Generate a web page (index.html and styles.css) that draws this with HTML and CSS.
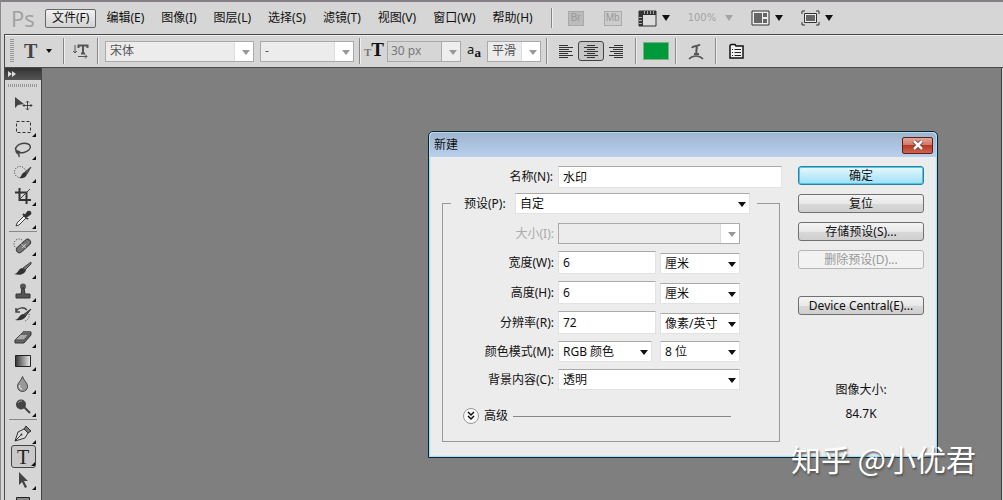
FILE: index.html
```html
<!DOCTYPE html>
<html lang="zh-CN">
<head>
<meta charset="utf-8">
<title>Photoshop</title>
<link rel="stylesheet" href="styles.css">
</head>
<body>
<div class="app">
  <header class="menubar">
    <span class="logo">Ps</span>
    <nav class="menus">
      <button class="menu menu-active">文件(F)</button>
      <button class="menu">编辑(E)</button>
      <button class="menu">图像(I)</button>
      <button class="menu">图层(L)</button>
      <button class="menu">选择(S)</button>
      <button class="menu">滤镜(T)</button>
      <button class="menu">视图(V)</button>
      <button class="menu">窗口(W)</button>
      <button class="menu">帮助(H)</button>
    </nav>
    <span class="bar-line menu-line"></span>
    <div class="launchers">
      <button class="badge" disabled>Br</button>
      <button class="badge badge-wide" disabled>Mb</button>
    </div>
    <div class="views">
      <button class="view-btn" aria-label="查看额外内容">
        <svg width="19" height="17" viewBox="0 0 19 17"><path d="M1 1h17v15H1z" fill="#ddd" stroke="#333"/><path d="M1 1h17v4H5v11H1z" fill="#333"/><path d="M6.500 1v3M9.500 1v3M12.500 1v3M15.500 1v3M1 7.500h3M1 10.500h3M1 13.500h3" stroke="#aaa"/></svg>
        <span class="caret"></span>
      </button>
      <button class="view-btn zoom-level" disabled>100% <span class="caret"></span></button>
      <button class="view-btn" aria-label="排列文档">
        <svg width="19" height="16" viewBox="0 0 19 16"><path d="M1 1h17v14H1z" fill="#eee" stroke="#333"/><path d="M3 3h8v10H3zM12 3h4v4h-4zM12 9h4v4h-4z" fill="#666"/></svg>
        <span class="caret"></span>
      </button>
      <button class="view-btn" aria-label="屏幕模式">
        <svg width="19" height="16" viewBox="0 0 19 16"><path d="M1 4V1h3M15 1h3v3M18 12v3h-3M4 15H1v-3" fill="none" stroke="#333"/><path d="M3.500 3.500h12v9h-12z" fill="#eee" stroke="#333"/><path d="M5 5h9v6H5z" fill="#666"/></svg>
        <span class="caret"></span>
      </button>
    </div>
  </header>

  <div class="options">
    <span class="grip"></span>
    <button class="type-tool" aria-label="文字工具"><span class="serif-t">T</span><span class="caret caret-small"></span></button>
    <span class="bar-line"></span>
    <button class="orient" aria-label="更改文本方向">
      <svg width="16" height="16" viewBox="0 0 16 16" fill="none" stroke="#555"><path d="M2 2v8M0 8l2 2 2-2M5 13.500h9M12 11.500l2 2-2 2"/><path d="M5.500 5V2.500h9V5M10 2.500v8M8 10.500h4" stroke-width="2"/></svg>
    </button>
    <span class="bar-line"></span>
    <span class="pick pick-off font-family"><select aria-label="字体" disabled><option>宋体</option></select></span>
    <span class="pick pick-off font-style"><select aria-label="字体样式" disabled><option>-</option></select></span>
    <span class="bar-line"></span>
    <label class="size-mark" for="size" aria-label="字体大小"><span class="t-small">T</span><span class="t-big">T</span></label>
    <span class="pick pick-off font-size"><select id="size" disabled><option>30 px</option></select></span>
    <label class="aa-mark" for="aa"><span>a</span><span class="a-low">a</span></label>
    <span class="pick pick-off anti-alias"><select id="aa" disabled><option>平滑</option></select></span>
    <span class="bar-line"></span>
    <div class="aligns">
      <button class="align" aria-label="左对齐"><svg width="16" height="14" viewBox="0 0 16 14"><path d="M1 1.500h9M1 3.500h14M1 5.500h10M1 7.500h13M1 9.500h9M1 11.500h14M1 13.500h9" stroke="#333"/></svg></button>
      <button class="align align-on" aria-label="居中"><svg width="16" height="14" viewBox="0 0 16 14"><path d="M4 1.500h8M1 3.500h14M4 5.500h8M1 7.500h14M4 9.500h8M1 11.500h14M4 13.500h8" stroke="#333"/></svg></button>
      <button class="align" aria-label="右对齐"><svg width="16" height="14" viewBox="0 0 16 14"><path d="M6 1.500h9M1 3.500h14M5 5.500h10M2 7.500h13M6 9.500h9M1 11.500h14M6 13.500h9" stroke="#333"/></svg></button>
    </div>
    <span class="bar-line"></span>
    <button class="swatch" aria-label="文本颜色"></button>
    <span class="bar-line"></span>
    <button class="warp" aria-label="变形文字"><svg width="16" height="17" viewBox="0 0 16 17" fill="none" stroke="#555"><path d="M4 5C5 2 8 4.500 12 1.500" stroke-width="2"/><path d="M8.500 3c1 3-1 5 0 8M6 11h5" stroke-width="2"/><path d="M1 16c4-4 10-4 14 0" stroke-width="1.500"/></svg></button>
    <span class="bar-line"></span>
    <button class="panels" aria-label="字符和段落面板"><svg width="15" height="16" viewBox="0 0 15 16"><path d="M1 2.500l1-1h4l1 1.500h7v12H1z" fill="#f4f4f4" stroke="#111" stroke-width="1.500"/><path d="M3 6.500h1M3 9.500h1M3 12.500h1M5.500 6.500H12M5.500 9.500H12M5.500 12.500H12" stroke="#222"/></svg></button>
  </div>

  <main class="workspace">
    <aside class="tools">
      <div class="tools-head"><svg width="9" height="6" viewBox="0 0 9 6"><path d="M0 0l4 3-4 3zM4 0l4 3-4 3z" fill="#ddd"/></svg></div>
      <span class="tools-grip"></span>
      <button class="tool" aria-label="移动"><svg viewBox="0 0 20 20"><path d="M2 3v11l3-3 6-1z" fill="#444"/><path d="M14.500 7v9M10 11.500h9M13 8.500l1.500-1.500 1.500 1.500M13 14.500l1.500 1.500 1.500-1.500M11.500 10L10 11.500l1.500 1.500M17.500 10l1.500 1.500-1.500 1.500" fill="none" stroke="#444"/></svg></button>
      <button class="tool more" aria-label="选框"><svg viewBox="0 0 20 20"><path d="M3.500 4.500h14v11h-14z" fill="none" stroke="#333" stroke-dasharray="3 2"/></svg></button>
      <button class="tool more" aria-label="套索"><svg viewBox="0 0 20 20" fill="none" stroke="#444" stroke-width="1.500"><ellipse cx="10" cy="8" rx="7.500" ry="4.500" transform="rotate(-12 10 8)"/><path d="M4 10c-2 2 0 4 2 3s-2-3-2-1 3 2 2 5"/></svg></button>
      <button class="tool more" aria-label="快速选择"><svg viewBox="0 0 20 20"><circle cx="7" cy="9" r="5.500" fill="none" stroke="#333" stroke-dasharray="1 1.500"/><path d="M18 4l-6 5 2 2z" fill="#555" stroke="#444"/><path d="M12 9l2 2c-1 4-5 5-8 4 3-1 2-5 6-6z" fill="#333"/></svg></button>
      <button class="tool more" aria-label="裁剪"><svg viewBox="0 0 20 20"><path d="M6.500 2v12H18M2 6.500h11.500V18" fill="none" stroke="#333" stroke-width="2"/><path d="M6 14L17 3" stroke="#444"/></svg></button>
      <button class="tool more" aria-label="吸管"><svg viewBox="0 0 20 20"><path d="M3 17l1-3 7-7 2 2-7 7z" fill="#eee" stroke="#444"/><path d="M10 5l5 5M12 7l3-4c2-1 3 1 2 2l-4 3z" fill="#333" stroke="#333" stroke-width="2"/></svg></button>
      <span class="tool-line"></span>
      <button class="tool more" aria-label="修复画笔"><svg viewBox="0 0 20 20"><circle cx="6" cy="8" r="5" fill="none" stroke="#333" stroke-dasharray="1 1.500"/><rect x="2" y="7" width="17" height="6" rx="3" transform="rotate(-42 10.500 10)" fill="#777" stroke="#444"/><path d="M8.500 8l4 4M9 12l4-4" stroke="#ccc"/></svg></button>
      <button class="tool more" aria-label="画笔"><svg viewBox="0 0 20 20"><path d="M18 3l-8 6 2 2 6-6z" fill="#777" stroke="#444"/><path d="M9 9l4 2c-1 4-6 6-12 4 4 0 4-5 8-6z" fill="#333"/></svg></button>
      <button class="tool more" aria-label="仿制图章"><svg viewBox="0 0 20 20"><circle cx="10" cy="4.500" r="3" fill="#555"/><path d="M9 6h2l1 6h5v4H3v-4h5z" fill="#555" stroke="#333"/></svg></button>
      <button class="tool more" aria-label="历史记录画笔"><svg viewBox="0 0 20 20"><path d="M3 6c3-4 8-4 11-1M3 3v4h4" fill="none" stroke="#444" stroke-width="1.500"/><path d="M18 4l-8 6 2 2z" fill="#555" stroke="#333"/><path d="M10 9l3 2c-2 4-6 5-11 4 4-1 4-5 8-6z" fill="#333"/><path d="M16 9c1 3-1 6-4 7" fill="none" stroke="#444" stroke-dasharray="1 1.500"/></svg></button>
      <button class="tool more" aria-label="橡皮擦"><svg viewBox="0 0 20 20"><path d="M2 12l8-8h8v3l-7 8H2z" fill="#666" stroke="#333"/><path d="M2 12l8-8h8l-7 8z" fill="#aaa" stroke="#444"/><path d="M7 7h8l3-3h-8z" fill="#666"/></svg></button>
      <button class="tool more" aria-label="渐变"><svg viewBox="0 0 20 20"><defs><linearGradient id="fade"><stop stop-color="#333"/><stop offset="1" stop-color="#eee"/></linearGradient></defs><path d="M2.500 4.500h15v11h-15z" fill="url(#fade)" stroke="#222"/></svg></button>
      <button class="tool more" aria-label="模糊"><svg viewBox="0 0 20 20"><path d="M9.500 2.500c1 4 5 6 5 10a5 5 0 0 1-10 0c0-4 4-6 5-10z" fill="#999" stroke="#444"/><path d="M7 11c-1 3 0 4 2 4" fill="none" stroke="#eee"/></svg></button>
      <button class="tool more" aria-label="减淡"><svg viewBox="0 0 20 20"><path d="M11 10l6 6" stroke="#444" stroke-width="2"/><circle cx="8" cy="7.500" r="5" fill="#444"/><path d="M5 6c1-2 3-2 4-2" fill="none" stroke="#999"/></svg></button>
      <span class="tool-line"></span>
      <button class="tool more" aria-label="钢笔"><svg viewBox="0 0 20 20"><path d="M2 17L5 8l6-3 4 4-3 5z" fill="#ddd" stroke="#333"/><path d="M2 17l6-6M11 5l2-3 5 5-3 2z" fill="#777" stroke="#333"/><circle cx="8.500" cy="10.500" r="1" fill="#333"/></svg></button>
      <button class="tool more tool-on" aria-label="横排文字"><span class="serif-t">T</span></button>
      <button class="tool more" aria-label="路径选择"><svg viewBox="0 0 20 20"><path d="M6 2v13l3-3 3 6 2-1-3-6h4z" fill="#444"/></svg></button>
      <button class="tool more" aria-label="矩形"><svg viewBox="0 0 20 20"><path d="M3.500 4.500h13v11h-13z" fill="#888" stroke="#222"/></svg></button>
    </aside>

    <section class="canvas">
      <form class="dialog" role="dialog" aria-labelledby="dialog-title">
        <div class="titlebar">
          <h1 class="title" id="dialog-title">新建</h1>
          <button class="close" type="button" aria-label="关闭"><svg width="12" height="10" viewBox="0 0 12 10"><path d="M2 1l8 8M10 1L2 9" stroke="#5d302c" stroke-width="4"/><path d="M2 1l8 8M10 1L2 9" stroke="#fff" stroke-width="2.500"/></svg></button>
        </div>
        <div class="dialog-body">
          <div class="settings">
            <div class="name-row">
              <label for="name">名称(N):</label>
              <input class="box" id="name" type="text" value="水印">
            </div>
            <fieldset class="preset">
              <legend class="preset-head">
                <label for="preset">预设(P):</label>
                <span class="pick"><select id="preset"><option>自定</option></select></span>
              </legend>
              <div class="rows">
                <label class="faded" for="dim">大小(I):</label>
                <div class="fields"><span class="pick pick-off"><select id="dim" disabled><option></option></select></span></div>
                <label for="width">宽度(W):</label>
                <div class="fields"><input class="box amount" id="width" type="text" value="6"><span class="pick unit"><select aria-label="宽度单位"><option>厘米</option></select></span></div>
                <label for="height">高度(H):</label>
                <div class="fields"><input class="box amount" id="height" type="text" value="6"><span class="pick unit"><select aria-label="高度单位"><option>厘米</option></select></span></div>
                <label for="res">分辨率(R):</label>
                <div class="fields"><input class="box amount" id="res" type="text" value="72"><span class="pick unit"><select aria-label="分辨率单位"><option>像素/英寸</option></select></span></div>
                <label for="mode">颜色模式(M):</label>
                <div class="fields"><span class="pick mode"><select id="mode"><option>RGB 颜色</option></select></span><span class="pick unit"><select aria-label="位深度"><option>8 位</option></select></span></div>
                <label for="bg">背景内容(C):</label>
                <div class="fields"><span class="pick"><select id="bg"><option>透明</option></select></span></div>
              </div>
              <div class="advanced">
                <button class="expand" type="button" id="expand" aria-label="展开高级"><svg width="8" height="10" viewBox="0 0 8 10"><path d="M1 1l3 3 3-3M1 5l3 3 3-3" fill="none" stroke="#111" stroke-width="1.500"/></svg></button>
                <label for="expand">高级</label>
                <span class="rule"></span>
              </div>
            </fieldset>
          </div>
          <div class="actions">
            <button class="action action-main" type="button">确定</button>
            <button class="action" type="button">复位</button>
            <button class="action" type="button">存储预设(S)...</button>
            <button class="action" type="button" disabled>删除预设(D)...</button>
            <button class="action action-apart" type="button">Device Central(E)...</button>
            <p class="weight">图像大小:<br>84.7K</p>
          </div>
        </div>
      </form>
      <p class="watermark">知乎 @小优君</p>
    </section>
  </main>
</div>
</body>
</html>
```

FILE: styles.css
```css
* { box-sizing: border-box; }

body {
  margin: 0;
  background: #d6d6d6;
  color: #111;
  font: 12px/16px "Noto Sans", "Noto Sans CJK SC", sans-serif;
}

button, input, select { font: inherit; color: inherit; }
button { padding: 0; border: 0; background: none; }
svg { display: block; flex: none; }

.app {
  display: flex;
  flex-direction: column;
  height: 100vh;
  overflow: hidden;
  border-left: 1px solid #8a8a8a;
}

/* Menu bar */
.menubar {
  display: flex;
  flex: none;
  align-items: center;
  height: 34px;
  padding-left: 10px;
  border-top: 2px solid #858085;
  white-space: nowrap;
}
.logo { width: 34px; color: #a0a0a0; font: 22px/24px "Open Sans", sans-serif; }
.menus { display: flex; gap: 3px; }
.menu { height: 19px; padding: 0 6px; border: 1px solid transparent; line-height: 16px; }
.menu-active { border-color: #666; border-radius: 2px; background: linear-gradient(#f2f2f2, #d2d2d2); }
.bar-line { flex: none; width: 2px; height: 26px; border-left: 1px solid #888; border-right: 1px solid #eee; }
.menu-line { height: 20px; margin-left: 11px; }
.launchers { display: flex; gap: 20px; margin-left: 15px; }
.badge { width: 16px; height: 15px; border: 1px solid #aaa; background: #bbb; color: #999; font: 10px/12px "Liberation Sans", sans-serif; }
.badge-wide { width: 18px; background: #ccc; }
.views { display: flex; align-items: center; gap: 18px; margin-left: 16px; }
.view-btn { display: flex; align-items: center; gap: 5px; }
.zoom-level { gap: 9px; color: #a3a3a3; font: 10px/16px "DejaVu Sans", sans-serif; }
.caret { border: 4px solid transparent; border-top: 6px solid currentColor; border-bottom: 0; }
.caret-small { border-width: 4px 3px 0; }

/* Options bar */
.options {
  display: flex;
  flex: none;
  align-items: center;
  height: 34px;
  margin-left: 3px;
  padding-left: 5px;
  border: solid #4c484c;
  border-width: 1px 0 1px 1px;
  box-shadow: inset 0 1px #f0f0f0;
}
.grip { width: 4px; height: 24px; background: repeating-linear-gradient(#999 0 1px, transparent 1px 2px); }
.type-tool { display: flex; align-items: center; gap: 9px; width: 49px; padding-left: 10px; }
.serif-t { color: #444; font: bold 20px/20px "Liberation Serif", serif; }
.orient { width: 32px; padding-left: 8px; }
.font-family { width: 149px; margin: 0 6px; }
.font-style { width: 94px; margin-right: 5px; }
.size-mark, .aa-mark { display: flex; justify-content: center; width: 26px; font-family: "Liberation Serif", serif; }
.size-mark { align-items: baseline; }
.t-small { color: #777; font-size: 11px; font-weight: bold; }
.t-big { font-size: 19px; font-weight: bold; }
.aa-mark { align-items: flex-start; font: 13px/14px "Noto Sans", sans-serif; }
.a-low { padding-top: 4px; font-family: "Liberation Serif", serif; font-weight: bold; }
.font-size { width: 74px; }
.anti-alias { width: 54px; margin-right: 5px; }
.aligns { display: flex; align-items: center; justify-content: center; gap: 3px; width: 87px; padding-right: 2px; }
.align { padding: 3px 1px; }
.align-on { padding: 2px 4px; border: 1px solid #444; border-radius: 3px; background: #c6c6c6; }
.swatch { width: 26px; height: 18px; margin: 0 6px; border: 1px solid #7ab08a; background: #009a3a; }
.warp { width: 38px; padding-left: 11px; }
.panels { padding-left: 12px; }

/* Drop-downs and text boxes */
.pick { display: inline-flex; position: relative; height: 21px; }
.pick::after {
  content: "";
  position: absolute;
  top: 9px;
  right: 4px;
  border: 4px solid transparent;
  border-top: 5px solid #111;
  border-bottom: 0;
  pointer-events: none;
}
.pick select {
  appearance: none;
  width: 100%;
  height: 100%;
  padding: 0 4px;
  border: 1px solid #e2e2e2;
  border-top-color: #aaa;
  border-radius: 0;
  background: #fff;
  opacity: 1;
}
.pick-off select {
  border-color: #aaa;
  background: linear-gradient(to right, #ececec calc(100% - 19px), #ddd calc(100% - 19px), #ddd calc(100% - 18px), #fff calc(100% - 18px));
  color: #555;
}
.pick-off::after { border-top-color: #999; }
.font-size select { padding-left: 3px; background: linear-gradient(to right, #d6d6d6 calc(100% - 19px), #aaa calc(100% - 19px), #aaa calc(100% - 18px), #eee calc(100% - 18px)); color: #777; }
.box { height: 22px; padding: 0 4px; border: 1px solid #e2e2e2; border-top-color: #aaa; background: #fff; }

/* Toolbox */
.workspace { display: flex; flex: 1; min-height: 0; margin-left: 3px; border-left: 1px solid #4c484c; }
.tools {
  display: flex;
  flex: none;
  flex-direction: column;
  align-items: center;
  width: 37px;
  overflow: hidden;
  border-right: 1px solid #444;
}
.tools-head { flex: none; align-self: stretch; height: 12px; padding: 3px; background: linear-gradient(#333, #555); }
.tools-grip { flex: none; width: 30px; height: 3px; margin: 4px 0 5px; background: repeating-linear-gradient(to right, #999 0 1px, transparent 1px 2px); }
.tool { display: flex; flex: none; align-items: center; justify-content: center; position: relative; width: 25px; height: 23px; }
.tool svg { width: 20px; height: 20px; }
.more::after { content: ""; position: absolute; right: 0; bottom: 1px; border: 2px solid #111; border-top-color: transparent; border-left-color: transparent; }
.tool-on { border: 1px solid #444; border-radius: 3px; background: #c9c9c9; }
.tool-on .serif-t { font-weight: normal; color: #222; }
.tool-line { flex: none; width: 28px; height: 1px; margin: 1px 0 2px; background: #888; }

.canvas { position: relative; flex: 1; margin-right: 1px; border-right: 1px solid #444; background: #7f7f7f; }

/* Dialog window */
.dialog {
  position: absolute;
  top: 63px;
  right: 63px;
  width: 510px;
  border: 1px solid #13222e;
  border-radius: 5px 5px 0 0;
  background: #ececec;
  box-shadow: inset 0 0 0 1px #a9dff2, inset 0 0 0 2px #d5eef6;
}
.titlebar {
  display: flex;
  align-items: center;
  justify-content: space-between;
  height: 24px;
  margin: 1px;
  padding: 0 3px 0 4px;
  border-radius: 4px 4px 0 0;
  background: linear-gradient(#9fb5cf, #b9d0ec);
}
.title { margin: 0; font-size: 12px; font-weight: normal; }
.close {
  display: flex;
  align-items: center;
  justify-content: center;
  width: 31px;
  height: 17px;
  border: 1px solid #5d1f1a;
  border-radius: 2px;
  background: linear-gradient(#e3a598, #d2796a 45%, #b83a26 50%, #cf6350);
}
.dialog-body { display: flex; justify-content: space-between; padding: 8px 13px 15px; }
.settings { width: 340px; }
.name-row { display: grid; grid-template-columns: 111px 1fr; column-gap: 5px; align-items: center; text-align: right; }
.preset { min-width: 0; margin: 5px 2px 0 0; padding: 0 39px 17px 20px; border: 1px solid #999; }
.preset-head { display: flex; align-items: center; justify-content: space-between; width: 306px; margin-left: -12px; padding: 0 7px 0 13px; }
.preset-head .pick { width: 235px; }
.rows { display: grid; grid-template-columns: 91px 1fr; gap: 7px 4px; align-items: center; padding-top: 9px; }
.rows > label { text-align: right; white-space: nowrap; }
.faded { color: #aaa; }
.fields { display: flex; align-items: flex-end; justify-content: space-between; }
.fields .pick { flex: 1; }
.fields .unit { flex: none; width: 80px; }
.fields .mode { flex: none; width: 94px; }
.amount { width: 98px; height: 23px; }
.advanced { display: flex; align-items: center; gap: 5px; margin: 18px 9px 0 0; }
.expand { display: flex; align-items: center; justify-content: center; width: 16px; height: 16px; border: 1px solid #999; border-radius: 50%; background: #f8f8f8; }
.rule { flex: 1; height: 1px; background: #888; }

.actions { display: flex; flex-direction: column; gap: 9px; width: 126px; }
.action {
  height: 19px;
  padding-top: 1px;
  border: 1px solid #707070;
  border-radius: 3px;
  background: linear-gradient(#f4f4f4, #e8e8e8 50%, #d8d8d8 55%, #cfcfcf);
  line-height: 16px;
  white-space: nowrap;
}
.action-main { border-color: #2f7f9f; background: linear-gradient(#e6f7fd, #c3ecfb 50%, #9fdef7); box-shadow: inset 0 0 0 1px #4cc8ec; }
.action:disabled { border-color: #b5b5b5; background: #f2f2f2; color: #999; }
.action-apart { margin-top: 18px; }
.weight { margin: 54px 0 0; line-height: 24px; text-align: center; }

.watermark {
  position: absolute;
  right: 25px;
  bottom: 22px;
  margin: 0;
  color: #fff;
  font: 30px/40px "Noto Sans CJK SC", sans-serif;
  text-shadow: 1px 2px 2px #555;
  white-space: nowrap;
}
```
